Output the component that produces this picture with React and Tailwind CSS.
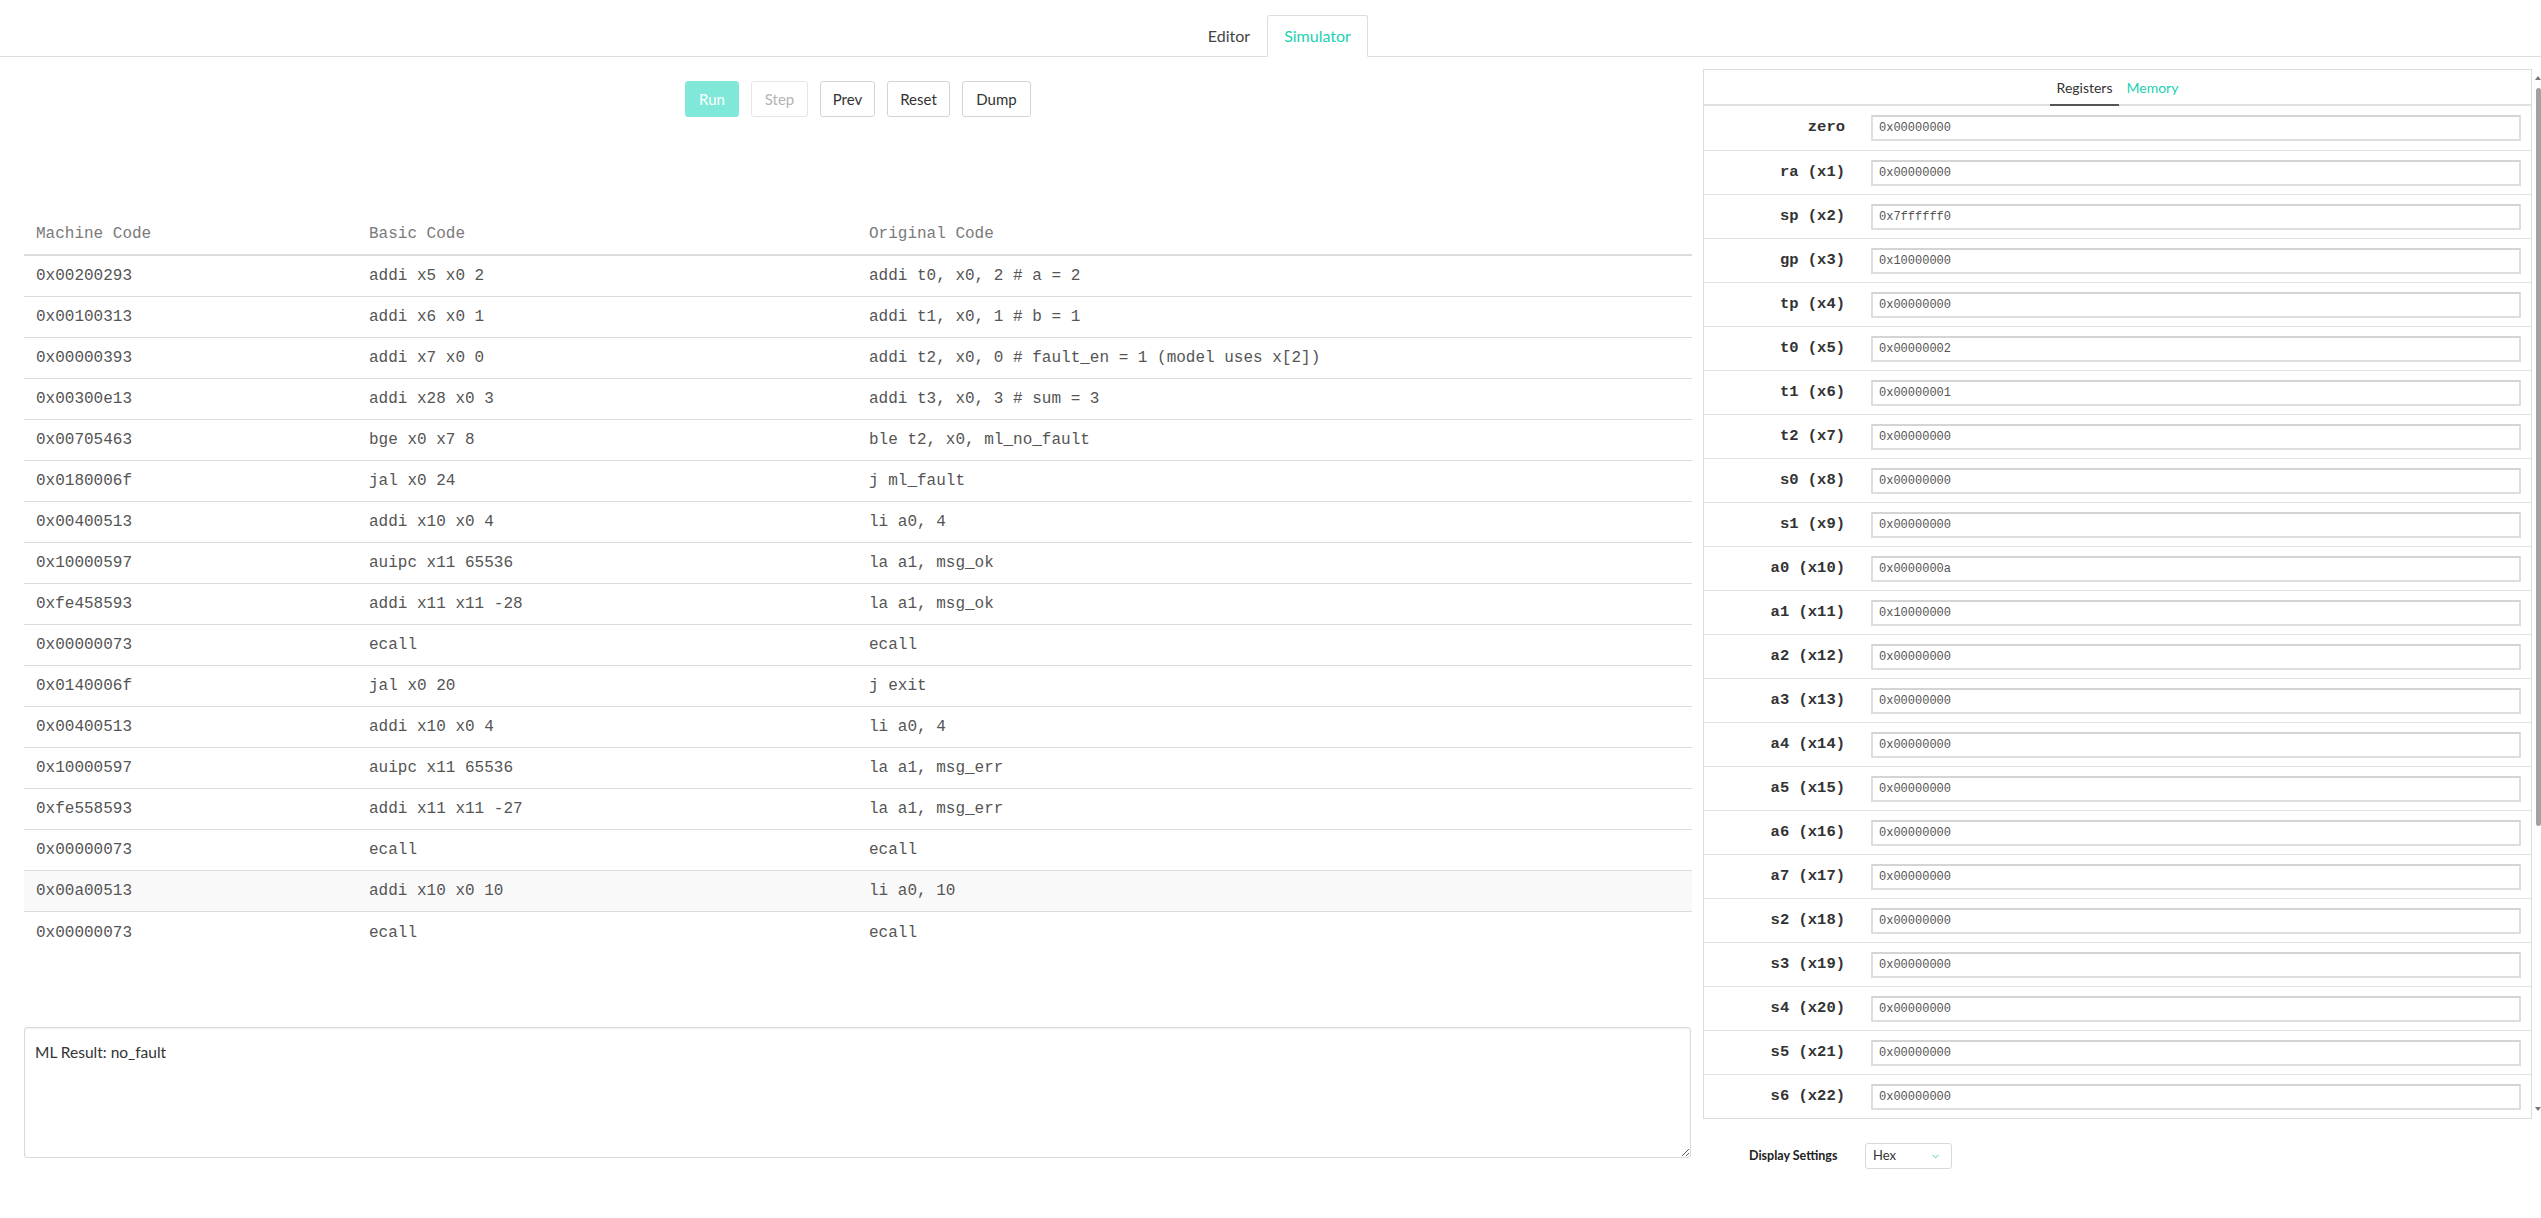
import { ChevronDown } from 'lucide-react'

const code = [
  ['0x00200293', 'addi x5 x0 2', 'addi t0, x0, 2 # a = 2'],
  ['0x00100313', 'addi x6 x0 1', 'addi t1, x0, 1 # b = 1'],
  ['0x00000393', 'addi x7 x0 0', 'addi t2, x0, 0 # fault_en = 1 (model uses x[2])'],
  ['0x00300e13', 'addi x28 x0 3', 'addi t3, x0, 3 # sum = 3'],
  ['0x00705463', 'bge x0 x7 8', 'ble t2, x0, ml_no_fault'],
  ['0x0180006f', 'jal x0 24', 'j ml_fault'],
  ['0x00400513', 'addi x10 x0 4', 'li a0, 4'],
  ['0x10000597', 'auipc x11 65536', 'la a1, msg_ok'],
  ['0xfe458593', 'addi x11 x11 -28', 'la a1, msg_ok'],
  ['0x00000073', 'ecall', 'ecall'],
  ['0x0140006f', 'jal x0 20', 'j exit'],
  ['0x00400513', 'addi x10 x0 4', 'li a0, 4'],
  ['0x10000597', 'auipc x11 65536', 'la a1, msg_err'],
  ['0xfe558593', 'addi x11 x11 -27', 'la a1, msg_err'],
  ['0x00000073', 'ecall', 'ecall'],
  ['0x00a00513', 'addi x10 x0 10', 'li a0, 10'],
  ['0x00000073', 'ecall', 'ecall'],
]

// only the rows visible in the scrolled register list (zero .. s6)
const abi = ['zero', 'ra', 'sp', 'gp', 'tp', 't0', 't1', 't2', 's0', 's1', 'a0', 'a1', 'a2', 'a3', 'a4', 'a5', 'a6', 'a7',
  's2', 's3', 's4', 's5', 's6']

const values = { 2: '0x7ffffff0', 3: '0x10000000', 5: '0x00000002', 6: '0x00000001', 10: '0x0000000a', 11: '0x10000000' }

const registers = abi.map((name, i) => ({
  label: i === 0 ? name : `${name} (x${i})`,
  value: values[i] || '0x00000000',
}))

function Button({ children, width, kind }) {
  const look =
    kind === 'primary'
      ? 'bg-[#80e8d8] text-white border-[#80e8d8]'
      : kind === 'disabled'
        ? 'bg-white text-[#b4b4b4] border-[#e6e6e6]'
        : 'bg-white text-[#333] border-[#d4d4d4]'
  return (
    <button className={`flex h-[36px] items-center justify-center rounded-[3px] border text-[15px] font-normal ${width} ${look}`}>
      {children}
    </button>
  )
}

export default function App() {
  return (
    <div className="h-[1218px] w-full overflow-hidden bg-white font-[family-name:Lato,sans-serif] text-[#333]">
      {/* top tabs */}
      <div className="flex h-[57px] items-end justify-center border-b border-[#ddd] pl-[18px]">
        <div className="-mb-px flex h-[42px] w-[76px] items-center justify-center border border-transparent text-[16px] text-[#444]">
          Editor
        </div>
        <div className="-mb-px flex h-[42px] w-[101px] items-center justify-center rounded-t-[3px] border border-[#ddd] border-b-white bg-white text-[16px] text-[#22d1b1]">
          Simulator
        </div>
      </div>

      <div className="flex">
        {/* left: controls, code table, output */}
        <div className="ml-[24px] w-[1668px] pt-[24px]">
          <div className="flex justify-center gap-[12px]">
            <Button width="w-[54px]" kind="primary">Run</Button>
            <Button width="w-[57px]" kind="disabled">Step</Button>
            <Button width="w-[55px]">Prev</Button>
            <Button width="w-[63px]">Reset</Button>
            <Button width="w-[69px]">Dump</Button>
          </div>

          <div className="mt-[96px] font-[family-name:'Liberation_Mono',monospace] text-[16px]">
            <div className="grid h-[43px] grid-cols-[333px_500px_1fr] items-center border-b-2 border-[#dcdcdc] text-[#7a7a7a]">
              <div className="pl-[12px]">Machine Code</div>
              <div className="pl-[12px]">Basic Code</div>
              <div className="pl-[12px]">Original Code</div>
            </div>
            {code.map((r, i) => (
              <div
                key={i}
                className={`grid h-[41px] grid-cols-[333px_500px_1fr] items-center whitespace-pre text-[#555] ${
                  i < code.length - 1 ? 'border-b border-[#dcdcdc]' : ''
                } ${i === 15 ? 'bg-[#f9f9f9]' : ''}`}
              >
                <div className="pl-[12px]">{r[0]}</div>
                <div className="pl-[12px]">{r[1]}</div>
                <div className="pl-[12px]">{r[2]}</div>
              </div>
            ))}
          </div>

          <textarea
            readOnly
            defaultValue="ML Result: no_fault"
            className="mt-[74px] block h-[131px] w-[1667px] rounded-[3px] border border-[#d9d9d9] px-[10px] pt-[12px] font-[family-name:Lato,sans-serif] text-[15.5px] leading-[24px] text-[#333] shadow-[inset_0_1px_2px_rgba(0,0,0,0.06)] outline-none"
          />
        </div>

        {/* right: registers */}
        <div className="ml-[11px] mt-[12px] w-[838px]">
          <div className="flex h-[1050px]">
            <div className="flex w-[829px] flex-col border border-[#dcdcdc]">
              <div className="flex h-[36px] shrink-0 items-stretch justify-center border-b-2 border-[#e0e0e0] text-[14px]">
                <div className="-mb-[2px] flex items-center border-b-2 border-[#555] px-[7px] text-[#333]">Registers</div>
                <div className="flex items-center px-[7px] text-[#22d1b1]">Memory</div>
              </div>
              <div className="h-[1012px] overflow-hidden">
                {registers.map((r, i) => (
                  <div
                    key={r.label}
                    className={`flex h-[44px] items-center pr-[10px] ${i > 0 ? 'border-t border-[#e2e2e2]' : ''}`}
                  >
                    <div className="w-[141px] whitespace-pre text-right font-[family-name:'Liberation_Mono',monospace] text-[15.5px] font-bold text-[#333]">
                      {r.label}
                    </div>
                    <input
                      readOnly
                      defaultValue={r.value}
                      className="ml-[26px] h-[26px] flex-1 border-2 border-[#dedede] border-t-[#d4d4d4] pl-[6px] font-[family-name:'Liberation_Mono',monospace] text-[12px] text-[#555] outline-none"
                    />
                  </div>
                ))}
              </div>
            </div>
            {/* scrollbar */}
            <div className="flex w-[9px] flex-col items-end">
              <div className="mt-[7px] h-0 w-0 border-x-[3px] border-b-[4px] border-x-transparent border-b-[#777]" />
              <div className="mt-[8px] h-[738px] w-[5px] rounded-[3px] bg-[#a2a2a2]" />
              <div className="flex-1" />
              <div className="mb-[8px] h-0 w-0 border-x-[3px] border-t-[4px] border-x-transparent border-t-[#777]" />
            </div>
          </div>

          <div className="mt-[24px] flex items-center">
            <div className="w-[162px] pl-[46px] text-[12.5px] font-bold text-[#222]">Display Settings</div>
            <div className="flex h-[26px] w-[87px] items-center justify-between rounded-[3px] border border-[#d9d9d9] pl-[7px] pr-[10px] text-[13px] text-[#333]">
              <span>Hex</span>
              <ChevronDown size={11} strokeWidth={2} className="text-[#22d1b1]" />
            </div>
          </div>
        </div>
      </div>
    </div>
  )
}
